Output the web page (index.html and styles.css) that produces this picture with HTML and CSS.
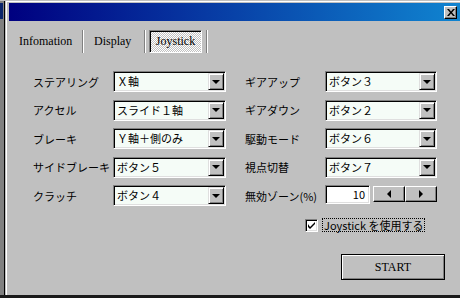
FILE: index.html
```html
<!DOCTYPE html>
<html lang="ja">
<head>
    <meta charset="UTF-8">
    <title>Joystick</title>
    <link rel="stylesheet" href="styles.css">
</head>
<body>
    <div class="screen">
        <div class="side"><div class="side-blue"></div></div>

        <div class="window">
            <div class="titlebar">
                <span class="close">
                    <svg width="8" height="7" viewBox="0 0 8 7"><path d="M0 0h2l2 2.5 2-2.5h2l-3 3.5 3 3.5h-2l-2-2.5-2 2.5h-2l3-3.5z" fill="#000"/></svg>
                </span>
            </div>

            <div class="body">
                <div class="tabs">
                    <span class="tab tab-info">Infomation</span>
                    <span class="sep"></span>
                    <span class="tab tab-display">Display</span>
                    <span class="sep"></span>
                    <span class="tab tab-active">Joystick</span>
                    <span class="sep sep-last"></span>
                </div>

                <div class="form">
                    <span class="label">ステアリング</span>
                    <div class="combo"><span class="combo-text">Ｘ軸</span><span class="drop"><i class="arrow"></i></span></div>
                    <span class="label">ギアアップ</span>
                    <div class="combo"><span class="combo-text">ボタン３</span><span class="drop"><i class="arrow"></i></span></div>

                    <span class="label">アクセル</span>
                    <div class="combo"><span class="combo-text">スライド１軸</span><span class="drop"><i class="arrow"></i></span></div>
                    <span class="label">ギアダウン</span>
                    <div class="combo"><span class="combo-text">ボタン２</span><span class="drop"><i class="arrow"></i></span></div>

                    <span class="label">ブレーキ</span>
                    <div class="combo"><span class="combo-text">Ｙ軸＋側のみ</span><span class="drop"><i class="arrow"></i></span></div>
                    <span class="label">駆動モード</span>
                    <div class="combo"><span class="combo-text">ボタン６</span><span class="drop"><i class="arrow"></i></span></div>

                    <span class="label">サイドブレーキ</span>
                    <div class="combo"><span class="combo-text">ボタン５</span><span class="drop"><i class="arrow"></i></span></div>
                    <span class="label">視点切替</span>
                    <div class="combo"><span class="combo-text">ボタン７</span><span class="drop"><i class="arrow"></i></span></div>

                    <span class="label">クラッチ</span>
                    <div class="combo"><span class="combo-text">ボタン４</span><span class="drop"><i class="arrow"></i></span></div>
                    <span class="label">無効ゾーン(%)</span>
                    <div class="deadzone">
                        <span class="num-input">10</span>
                        <span class="spin"><i class="tri-left"></i></span>
                        <span class="spin"><i class="tri-right"></i></span>
                    </div>
                </div>

                <div class="check-row">
                    <span class="checkbox">
                        <svg width="7" height="7" viewBox="0 0 7 7"><path d="M0 2v3l2 2 5-5v-2l-5 5z" fill="#000"/></svg>
                    </span>
                    <span class="check-label">Joystick を使用する</span>
                </div>

                <div class="button-row">
                    <button class="start">START</button>
                </div>
            </div>
        </div>
    </div>
    <div class="taskbar"></div>
</body>
</html>
```

FILE: styles.css
```css
/* Base */
* {
    box-sizing: border-box;
}

html, body {
    margin: 0;
    padding: 0;
}

body {
    width: 460px;
    height: 298px;
    overflow: hidden;
    background: #c0c0c0;
    font-family: "Noto Sans CJK JP", sans-serif;
    font-size: 11px;
    color: #000;
}

.screen {
    display: flex;
    height: 295px;
    padding-top: 1px;
}

/* Edge of the window behind */
.side {
    width: 5px;
    background: #808080;
    border-right: 1px solid #000;
    padding-top: 2px;
}

.side-blue {
    width: 3px;
    height: 16px;
    background: #0a246a;
}

/* Dialog */
.window {
    flex: 1;
    margin-left: 1px;
    border-top: 1px solid #fff;
    border-left: 1px solid #fff;
    padding: 1px 0 0 2px;
    display: flex;
    flex-direction: column;
}

.titlebar {
    height: 18px;
    background: linear-gradient(90deg, #000080, #1084d0);
    display: flex;
    justify-content: flex-end;
    align-items: center;
    padding-right: 3px;
}

.close {
    width: 13px;
    height: 13px;
    background: #c0c0c0;
    border: 1px solid;
    border-color: #fff #000 #000 #fff;
    box-shadow: inset -1px -1px #808080;
    display: flex;
    align-items: center;
    justify-content: center;
}

.body {
    flex: 1;
    padding: 9px 0 0 10px;
}

/* Tabs */
.tabs {
    display: flex;
    align-items: stretch;
    height: 23px;
    font-family: "Liberation Serif", serif;
    font-size: 12px;
}

.tab {
    display: flex;
    align-items: center;
}

.tab-info {
    width: 63px;
}

.tab-display {
    width: 50px;
    margin-left: 10px;
}

.tab-active {
    width: 53px;
    margin-left: 3px;
    justify-content: center;
    border: 1px solid;
    border-color: #808080 #fff #fff #808080;
    box-shadow: inset 1px 1px #000;
    background: repeating-conic-gradient(#fff 0 25%, #c0c0c0 0 50%) 0 0 / 2px 2px;
}

.sep {
    width: 2px;
    border-left: 1px solid #808080;
    border-right: 1px solid #fff;
}

.sep-last {
    margin-left: 4px;
}

/* Settings grid */
.form {
    display: grid;
    grid-template-columns: 80px 132px 80px 112px;
    grid-auto-rows: 21px;
    row-gap: 7.5px;
    margin-top: 18px;
    padding-left: 14px;
}

.label {
    display: flex;
    align-items: center;
    white-space: nowrap;
}

.combo {
    width: 113px;
    height: 21px;
    border: 1px solid;
    border-color: #808080 #fff #fff #808080;
    box-shadow: inset 1px 1px #000, inset -1px -1px #dfdfdf;
    background: #f5fcf7;
    padding: 1px;
    display: flex;
}

.form .combo:nth-child(4n) {
    width: 112px;
}

.combo-text {
    flex: 1;
    padding-left: 2px;
    line-height: 17px;
}

.drop {
    width: 16px;
    background: #c0c0c0;
    border: 1px solid;
    border-color: #dfdfdf #000 #000 #dfdfdf;
    box-shadow: inset 1px 1px #fff, inset -1px -1px #808080;
    display: flex;
    align-items: center;
    justify-content: center;
}

.arrow {
    width: 0;
    height: 0;
    border-left: 4px solid transparent;
    border-right: 4px solid transparent;
    border-top: 4px solid #000;
}

/* Dead zone spinner */
.deadzone {
    display: flex;
    align-items: flex-start;
}

.num-input {
    width: 45px;
    height: 19px;
    border: 1px solid;
    border-color: #808080 #fff #fff #808080;
    box-shadow: inset 1px 1px #000, inset -1px -1px #dfdfdf;
    background: #fff;
    text-align: right;
    padding-right: 4px;
    line-height: 17px;
    margin-right: 3px;
}

.spin {
    width: 32px;
    height: 16px;
    margin-top: 1px;
    background: #c0c0c0;
    border: 1px solid;
    border-color: #fff #000 #000 #fff;
    box-shadow: inset -1px -1px #808080;
    display: flex;
    align-items: center;
    justify-content: center;
}

.tri-left {
    border-top: 4px solid transparent;
    border-bottom: 4px solid transparent;
    border-right: 4px solid #000;
}

.tri-right {
    border-top: 4px solid transparent;
    border-bottom: 4px solid transparent;
    border-left: 4px solid #000;
}

/* Checkbox */
.check-row {
    display: flex;
    align-items: center;
    margin-top: 12px;
    padding-left: 286px;
    height: 14px;
}

.checkbox {
    width: 13px;
    height: 13px;
    border: 1px solid;
    border-color: #808080 #fff #fff #808080;
    box-shadow: inset 1px 1px #000, inset -1px -1px #dfdfdf;
    background: #fff;
    display: flex;
    align-items: center;
    justify-content: center;
}

.check-label {
    margin-left: 4px;
    border: 1px dotted #000;
    padding: 0 1px;
    line-height: 12px;
    white-space: nowrap;
}

/* Start button */
.button-row {
    margin-top: 22px;
    padding-left: 322px;
}

.start {
    width: 104px;
    height: 26px;
    margin: 0;
    padding: 0;
    border: 1px solid #000;
    box-shadow: inset 1px 1px #fff, inset -1px -1px #808080;
    background: #c0c0c0;
    font-family: "Liberation Serif", serif;
    font-size: 12px;
    color: #000;
}

.taskbar {
    height: 3px;
    background: #1a1a1a;
}
```
